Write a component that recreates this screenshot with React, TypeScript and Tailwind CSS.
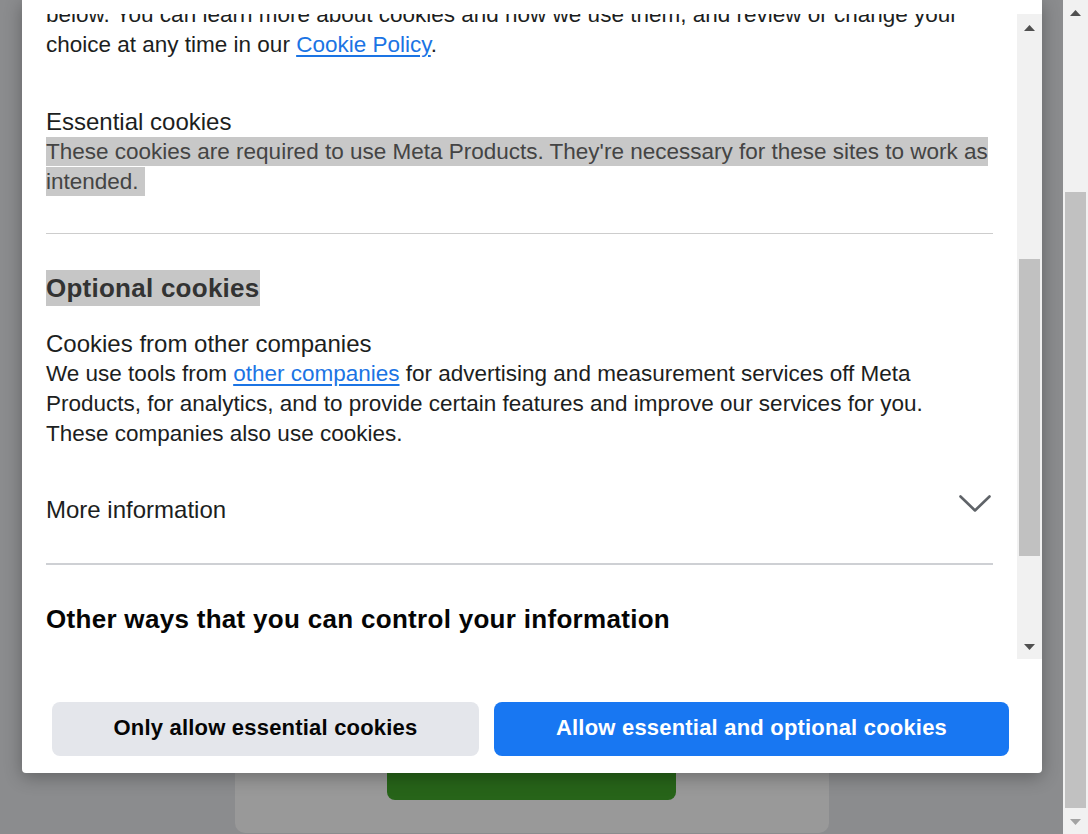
function ArrowUp({ color }: { color: string }) {
  return (
    <svg width="11" height="6" viewBox="0 0 11 6">
      <polygon points="0,6 11,6 5.5,0" fill={color} />
    </svg>
  );
}

function ArrowDown({ color }: { color: string }) {
  return (
    <svg width="11" height="6" viewBox="0 0 11 6">
      <polygon points="0,0 11,0 5.5,6" fill={color} />
    </svg>
  );
}

function Chevron() {
  return (
    <svg width="34" height="20" viewBox="0 0 34 20" className="mr-[1px] -mt-[1px]">
      <path d="M2.5 2.5 L17 16.5 L31.5 2.5" fill="none" stroke="#5f6368" strokeWidth="2.6" strokeLinecap="round" strokeLinejoin="round" />
    </svg>
  );
}

// scrollbar of the dialog's scroll area
function DialogScrollbar() {
  return (
    <div className="flex w-[25px] flex-col bg-[#f1f1f1]">
      <div className="flex h-[25px] items-center justify-center pt-[3px]">
        <ArrowUp color="#505050" />
      </div>
      <div className="h-[220px]" />
      <div className="mx-[2px] h-[297px] bg-[#c1c1c1]" />
      <div className="flex-1" />
      <div className="flex h-[25px] items-center justify-center">
        <ArrowDown color="#505050" />
      </div>
    </div>
  );
}

// scrollbar of the browser window
function PageScrollbar() {
  return (
    <div className="flex h-[834px] w-[25px] flex-col bg-[#f1f1f1]">
      <div className="flex h-[25px] items-center justify-center">
        <ArrowUp color="#505050" />
      </div>
      <div className="h-[167px]" />
      <div className="mx-[2px] h-[616px] bg-[#c1c1c1]" />
      <div className="flex-1" />
      <div className="flex h-[25px] items-center justify-center">
        <ArrowDown color="#a3a3a3" />
      </div>
    </div>
  );
}

export default function App() {
  return (
    <div className="flex h-[834px] w-[1088px] overflow-hidden bg-[#8b8c8e] font-['Liberation_Sans',Arial,sans-serif]">
      <div className="relative flex flex-1 flex-col justify-end">
        {/* page content behind the overlay */}
        <div className="mx-auto mb-[1px] flex h-[240px] w-[594px] flex-col justify-end rounded-b-[10px] bg-[#999999] pb-[33px]">
          <div className="mx-auto h-[48px] w-[289px] rounded-[8px] bg-[#276419]" />
        </div>

        {/* cookie dialog */}
        <div className="absolute left-[22px] top-0 flex h-[773px] w-[1020px] flex-col rounded-b-[4px] bg-white shadow-[0_4px_18px_rgba(0,0,0,0.3)]">
          <div className="h-[14px]" />
          <div className="flex h-[645px]">
            <div className="flex-1 overflow-hidden px-[24px]">
              <div className="-mt-[14px] text-[24px] leading-[30px] text-[#1c1e21]">
                <p className="text-[22.5px]">
                  below. You can learn more about cookies and how we use them, and review or change your
                  <br />
                  choice at any time in our{' '}
                  <a className="text-[#1b74e4] underline underline-offset-[3px]">Cookie Policy</a>.
                </p>

                <div className="mt-[47px]">
                  <div>Essential cookies</div>
                  <div className="text-[22.5px]">
                    <span className="bg-[#c8c8c8] py-[2px] text-[#444]">
                      These cookies are required to use Meta Products. They're necessary for these sites to work as intended.{'\u00a0'}
                    </span>
                  </div>
                </div>

                <div className="mt-[36px] h-[1px] bg-[#cdcdcd]" />

                <div className="mt-[36px] flex">
                  <span className="inline-block h-[36px] bg-[#c6c6c6] text-[26px] font-bold leading-[36px] tracking-[0.25px] text-[#333]">
                    Optional cookies
                  </span>
                </div>

                <div className="mt-[23px]">
                  <div>Cookies from other companies</div>
                  <p className="text-[22.5px]">
                    We use tools from{' '}
                    <a className="text-[#1b74e4] underline underline-offset-[3px]">other companies</a> for advertising and measurement services off Meta
                    <br />
                    Products, for analytics, and to provide certain features and improve our services for you.
                    <br />
                    These companies also use cookies.
                  </p>
                </div>

                <div className="mt-[46px] flex items-start justify-between">
                  <span>More information</span>
                  <Chevron />
                </div>

                <div className="mt-[38px] h-[2px] bg-[#ced0d4]" />

                <h2 className="mt-[38px] text-[26px] font-bold leading-[32px] tracking-[0.3px] text-[#050505]">
                  Other ways that you can control your information
                </h2>
              </div>
            </div>
            <DialogScrollbar />
          </div>

          <div className="flex gap-[15px] pl-[30px] pt-[43px]">
            <button className="h-[54px] w-[427px] rounded-[8px] bg-[#e4e6eb] pb-[4px] text-[22px] font-bold tracking-[0.2px] text-[#050505]">
              Only allow essential cookies
            </button>
            <button className="h-[54px] w-[515px] rounded-[8px] bg-[#1877f2] pb-[4px] text-[22px] font-bold tracking-[0.2px] text-white">
              Allow essential and optional cookies
            </button>
          </div>
        </div>
      </div>
      <PageScrollbar />
    </div>
  );
}
